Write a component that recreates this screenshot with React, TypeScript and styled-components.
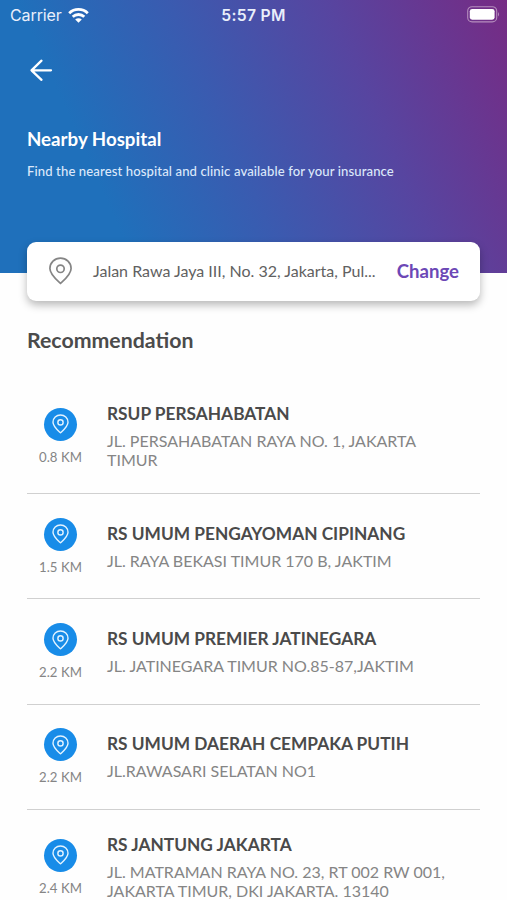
import React from "react";
import styled, { createGlobalStyle } from "styled-components";

const GlobalStyle = createGlobalStyle`
  * { box-sizing: border-box; }
  html, body { margin: 0; background: #fefefe; }
  body { font-family: Lato, "Liberation Sans", sans-serif; height: 900px; overflow: hidden; }
`;

const Screen = styled.main`
  width: 507px;
  height: 900px;
  overflow: hidden;
  background: #fefefe;
`;

const Header = styled.header`
  height: 273px;
  background: linear-gradient(66deg, #1f70bb 0%, #1f70bb 22%, #3a5bb0 46%, #5745a0 71%, #762b84 100%);
  color: #fff;
`;

const StatusBar = styled.div`
  display: grid;
  grid-template-columns: 1fr auto 1fr;
  align-items: center;
  height: 30px;
  padding: 0 7px 0 10px;
  font-family: Inter, Roboto, sans-serif;
  font-size: 16px;
  color: #e9effb;
`;

const Carrier = styled.div`
  display: flex;
  align-items: center;
  gap: 6px;
  letter-spacing: -0.1px;
`;

const Clock = styled.div`
  font-weight: 600;
  font-size: 15.7px;
  letter-spacing: 0.3px;
  margin-left: -3px;
`;

const Battery = styled.svg`
  justify-self: end;
  display: block;
  margin-top: -2px;
`;

const BackButton = styled.button`
  display: block;
  margin: 29px 0 0 29px;
  padding: 0;
  border: 0;
  background: none;
  width: 24px;
  height: 24px;
  svg { display: block; }
`;

const Title = styled.h1`
  margin: 44px 0 0 27px;
  font-size: 18.7px;
  line-height: 24px;
  font-weight: 700;
`;

const Subtitle = styled.p`
  margin: 12px 0 0 27px;
  font-size: 13.1px;
  line-height: 17px;
  font-weight: 500;
  letter-spacing: 0.11px;
  color: #dce8fa;
`;

const AddressCard = styled.section`
  position: relative;
  display: flex;
  align-items: center;
  height: 58.5px;
  margin: -31px 27px 0;
  padding: 0 21px;
  border-radius: 9px;
  background: #fff;
  box-shadow: 0 4px 8px rgba(0, 0, 0, 0.28);
`;

const Address = styled.span`
  flex: 1;
  margin-left: 20px;
  padding-bottom: 2px;
  font-size: 16px;
  color: #616161;
  white-space: nowrap;
`;

const ChangeButton = styled.button`
  padding: 0;
  border: 0;
  background: none;
  font: 700 18.6px Lato, sans-serif;
  color: #6c48b6;
`;

const SectionTitle = styled.h2`
  margin: 26.5px 0 0 27px;
  font-size: 21.3px;
  line-height: 26px;
  font-weight: 700;
  color: #4b4b4b;
`;

const List = styled.ul`
  list-style: none;
  margin: 26.1px 27px 0;
  padding: 0;
`;

const Item = styled.li`
  display: flex;
  align-items: center;
  padding: 23.7px 0 22.5px;
  border-bottom: 1px solid #d0d0d0;
`;

const Distance = styled.div`
  display: flex;
  flex-direction: column;
  align-items: center;
  width: 67px;
  gap: 7px;
  font-size: 13.2px;
  line-height: 18px;
  color: #858585;
`;

const Badge = styled.div`
  display: grid;
  place-items: center;
  width: 33px;
  height: 33px;
  border-radius: 50%;
  background: #188ce8;
`;

const Details = styled.div`
  width: 350px;
  margin-left: 13px;
  padding: 1.5px 0;
`;

const Name = styled.h3`
  margin: 0;
  font-size: 17.3px;
  line-height: 20px;
  font-weight: 700;
  color: #4a4a4a;
`;

const Street = styled.p`
  margin: 7px 0 0;
  font-size: 16px;
  line-height: 19px;
  color: #858585;
  white-space: pre-line;
`;

const Pin = ({ width, height, color, stroke }: { width: number; height: number; color: string; stroke: number }) => (
  <svg width={width} height={height} viewBox="0 0 24 28" fill="none" stroke={color} strokeWidth={stroke}>
    <path d="M12 26.5 C9 23.6 1.4 17.5 1.4 11.5 A10.6 10.3 0 0 1 22.6 11.5 C22.6 17.5 15 23.6 12 26.5Z" strokeLinejoin="round" />
    <circle cx="12" cy="11.8" r="3.7" />
  </svg>
);

const hospitals = [
  { km: "0.8 KM", name: "RSUP PERSAHABATAN", street: "JL. PERSAHABATAN RAYA NO. 1, JAKARTA\nTIMUR" },
  { km: "1.5 KM", name: "RS UMUM PENGAYOMAN CIPINANG", street: "JL. RAYA BEKASI TIMUR 170 B, JAKTIM" },
  { km: "2.2 KM", name: "RS UMUM PREMIER JATINEGARA", street: "JL. JATINEGARA TIMUR NO.85-87,JAKTIM" },
  { km: "2.2 KM", name: "RS UMUM DAERAH CEMPAKA PUTIH", street: "JL.RAWASARI SELATAN NO1" },
  { km: "2.4 KM", name: "RS JANTUNG JAKARTA", street: "JL. MATRAMAN RAYA NO. 23, RT 002 RW 001,\nJAKARTA TIMUR, DKI JAKARTA. 13140" },
];

export default function App() {
  return (
    <Screen>
      <GlobalStyle />
      <Header>
        <StatusBar>
          <Carrier>
            Carrier
            <svg width="21" height="15" viewBox="0 0 21 15" fill="none" stroke="#fff" strokeWidth="2.8">
              <path d="M1.2 5.2 C6.3 .2 14.7 .2 19.8 5.2" />
              <path d="M4.7 8.8 C8 5.7 13 5.7 16.3 8.8" />
              <path d="M7.2 11.4 C9 9.7 12 9.7 13.8 11.4 L10.5 14.8Z" fill="#fff" stroke="none" />
            </svg>
          </Carrier>
          <Clock>5:57 PM</Clock>
          <Battery width="33" height="17" viewBox="0 0 33 17">
            <rect x=".7" y=".7" width="29" height="15.2" rx="4.4" fill="none" stroke="#b58dbd" strokeWidth="1.1" />
            <rect x="2.8" y="2.9" width="24.8" height="10.8" rx="2.4" fill="#fff" />
            <path d="M31 6 Q33 8.3 31 10.6Z" fill="#b58dbd" />
          </Battery>
        </StatusBar>
        <BackButton aria-label="Back">
          <svg width="24" height="24" viewBox="0 0 24 24" fill="none" stroke="#fff" strokeWidth="2.3" strokeLinecap="round" strokeLinejoin="round">
            <path d="M22 11.3 H2.5 M12.5 1.7 L2.5 11.3 L12.5 20.8" />
          </svg>
        </BackButton>
        <Title>Nearby Hospital</Title>
        <Subtitle>Find the nearest hospital and clinic available for your insurance</Subtitle>
      </Header>
      <AddressCard>
        <Pin width={25} height={28} color="#858585" stroke={1.7} />
        <Address>Jalan Rawa Jaya III, No. 32, Jakarta, Pul...</Address>
        <ChangeButton>Change</ChangeButton>
      </AddressCard>
      <SectionTitle>Recommendation</SectionTitle>
      <List>
        {hospitals.map((h) => (
          <Item key={h.name}>
            <Distance>
              <Badge>
                <Pin width={17} height={20} color="#e3f3ff" stroke={2} />
              </Badge>
              {h.km}
            </Distance>
            <Details>
              <Name>{h.name}</Name>
              <Street>{h.street}</Street>
            </Details>
          </Item>
        ))}
      </List>
    </Screen>
  );
}
